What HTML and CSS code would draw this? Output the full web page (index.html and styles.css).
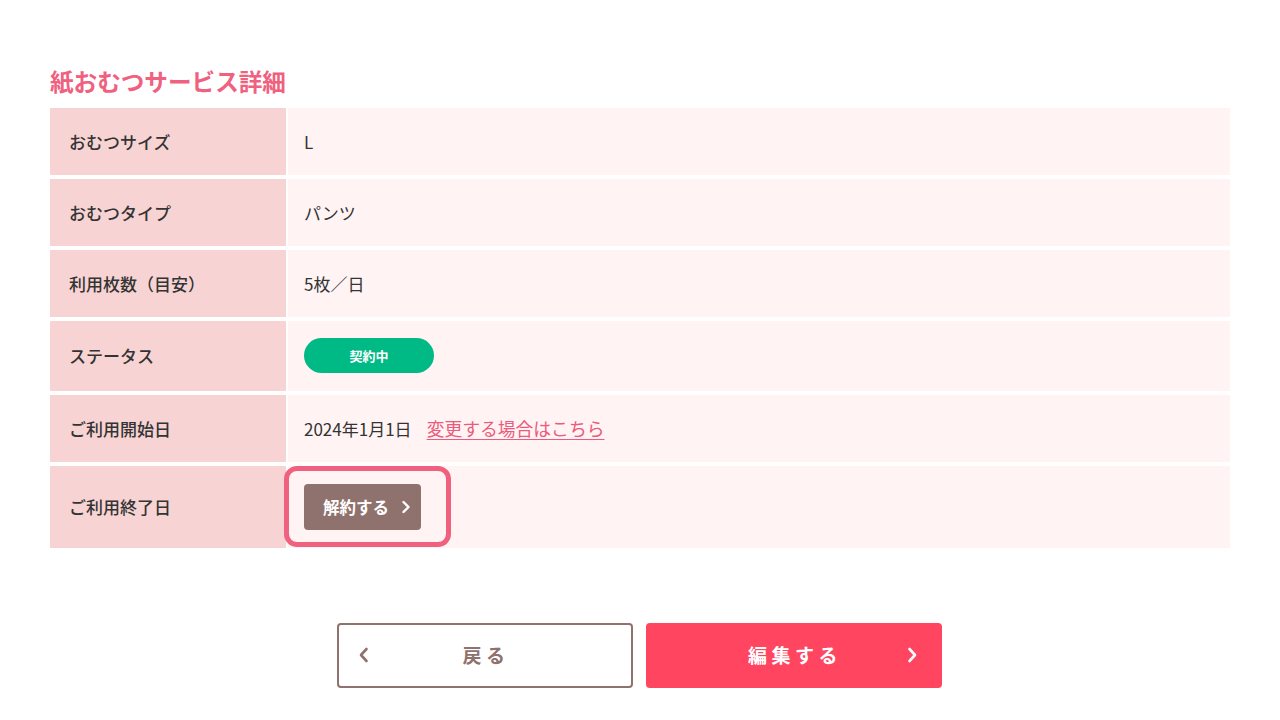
FILE: index.html
```html
<!DOCTYPE html>
<html lang="ja">
<head>
<meta charset="utf-8">
<title>紙おむつサービス詳細</title>
<link rel="stylesheet" href="styles.css">
</head>
<body>
<main class="page">
  <h1 class="title">紙おむつサービス詳細</h1>
  <div class="detail">
    <div class="label">おむつサイズ</div>
    <div class="value">L</div>

    <div class="label">おむつタイプ</div>
    <div class="value">パンツ</div>

    <div class="label">利用枚数（目安）</div>
    <div class="value">5枚／日</div>

    <div class="label">ステータス</div>
    <div class="value value-badge"><span class="badge">契約中</span></div>

    <div class="label">ご利用開始日</div>
    <div class="value">2024年1月1日<a class="link" href="#">変更する場合はこちら</a></div>

    <div class="label label-tall">ご利用終了日</div>
    <div class="value value-tall">
      <span class="cancel-wrap">
        <a class="cancel-btn" href="#">解約する
          <svg class="chev-sm" viewBox="0 0 10 14" width="10" height="14"><path d="M2.5 2 L7.5 7 L2.5 12" fill="none" stroke="#fff" stroke-width="2.4" stroke-linecap="round" stroke-linejoin="round"/></svg>
        </a>
        <span class="highlight"></span>
      </span>
    </div>
  </div>

  <div class="actions">
    <a class="btn btn-back" href="#">
      <svg class="chev chev-left" viewBox="0 0 12 16" width="12" height="16"><path d="M8.5 2 L3 8 L8.5 14" fill="none" stroke="#8f716d" stroke-width="2.6" stroke-linecap="round" stroke-linejoin="round"/></svg>
      <span class="btn-text">戻る</span>
    </a>
    <a class="btn btn-edit" href="#">
      <span class="btn-text">編集する</span>
      <svg class="chev chev-right" viewBox="0 0 12 16" width="12" height="16"><path d="M3.5 2 L9 8 L3.5 14" fill="none" stroke="#fff" stroke-width="2.6" stroke-linecap="round" stroke-linejoin="round"/></svg>
    </a>
  </div>
</main>
</body>
</html>
```

FILE: styles.css
```css
* { box-sizing: border-box; }

html, body {
  margin: 0;
  padding: 0;
  background: #ffffff;
}

body {
  font-family: "Noto Sans CJK JP", "Noto Sans", sans-serif;
  color: #333333;
}

.page {
  width: 1180px;
  margin: 0 auto;
  padding-top: 64px;
}

.title {
  margin: 0 0 10px 0;
  font-size: 23.6px;
  line-height: 34px;
  font-weight: 700;
  color: #f0607f;
}

.detail {
  display: grid;
  grid-template-columns: 236px 1fr;
  column-gap: 2px;
  row-gap: 4px;
}

.label,
.value {
  display: flex;
  align-items: center;
  min-height: 67px;
  font-size: 17px;
  padding-bottom: 1px;
}

.label {
  background: #f8d3d3;
  padding-left: 19px;
  padding-right: 19px;
  font-weight: 500;
  color: #333333;
}

.value {
  background: #fff3f3;
  padding-left: 16px;
  padding-right: 16px;
  color: #333333;
}

.value-badge,
.label:nth-child(7) {
  min-height: 70px;
}

.label-tall,
.value-tall {
  min-height: 82px;
}

.badge {
  display: inline-flex;
  align-items: center;
  justify-content: center;
  width: 130px;
  height: 35px;
  border-radius: 18px;
  background: #00ba85;
  color: #ffffff;
  font-size: 13px;
  font-weight: 700;
}

.link {
  margin-left: 15px;
  font-size: 17.8px;
  color: #ec5a7d;
  text-decoration: underline;
  text-underline-offset: 3px;
}

.cancel-wrap {
  position: relative;
  display: inline-flex;
}

.cancel-btn {
  display: inline-flex;
  align-items: center;
  gap: 12px;
  height: 46px;
  padding: 0 10px 0 19px;
  background: #8f716d;
  border-radius: 4px;
  color: #ffffff;
  font-size: 16.5px;
  font-weight: 700;
  text-decoration: none;
}

.highlight {
  position: absolute;
  left: -20px;
  top: -18px;
  width: 167px;
  height: 81px;
  border: 5px solid #f0607f;
  border-radius: 13px;
  pointer-events: none;
}

.actions {
  display: flex;
  justify-content: center;
  gap: 13px;
  margin-top: 75px;
  padding-right: 1px;
}

.btn {
  position: relative;
  display: flex;
  align-items: center;
  justify-content: center;
  width: 296px;
  height: 65px;
  border-radius: 4px;
  font-size: 19px;
  font-weight: 700;
  text-decoration: none;
  padding-bottom: 3px;
}

.btn-text {
  letter-spacing: 4.5px;
  padding-left: 2px;
}

.btn-back {
  border: 2px solid #8f716d;
  color: #8f716d;
  background: #ffffff;
}

.btn-edit {
  background: #ff4560;
  color: #ffffff;
}

.chev {
  position: absolute;
  top: 50%;
  margin-top: -9px;
}

.chev-left {
  left: 19px;
}

.chev-right {
  right: 24px;
}
```
